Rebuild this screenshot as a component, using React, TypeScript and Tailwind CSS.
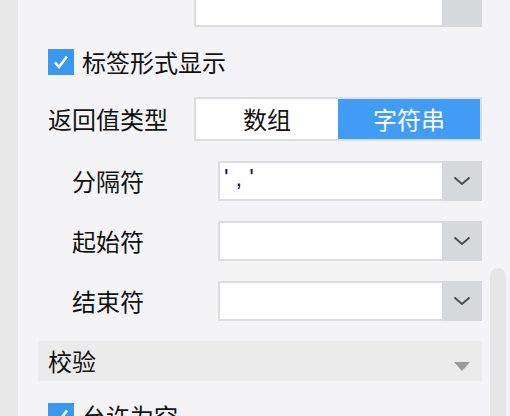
import React from "react";

const FONT = { fontFamily: '"Noto Sans CJK SC", "Noto Sans", sans-serif' };

function Chevron() {
  return (
    <svg width="18" height="10" viewBox="0 0 18 10" aria-hidden="true">
      <path d="M1.5 1.5 L9 8 L16.5 1.5" fill="none" stroke="#4a4a4a" strokeWidth="1.8" />
    </svg>
  );
}

function Check() {
  return (
    <span className="flex h-[26px] w-[26px] shrink-0 items-center justify-center bg-[#3b98f0]">
      <svg width="20" height="20" viewBox="0 0 20 20" aria-hidden="true">
        <path d="M4 10.5 L8 15 L16 4.5" fill="none" stroke="#fff" strokeWidth="2.6" />
      </svg>
    </span>
  );
}

function Select({ value, arrow = true, className = "" }: { value?: string; arrow?: boolean; className?: string }) {
  return (
    <div className={`flex h-[40px] ${className}`}>
      <div className="flex-1 border-y-2 border-l-2 border-[#dcdde0] bg-white pl-[4px] pt-[1px]">
        {value && (
          <span
            className="text-[24px] leading-[24px] tracking-[7px] text-[#1b1464]"
            style={{ fontFamily: '"Liberation Sans", sans-serif' }}
          >
            {value}
          </span>
        )}
      </div>
      <div className="flex w-[40px] items-center justify-center bg-[#d7d8dc]">
        {arrow && <Chevron />}
      </div>
    </div>
  );
}

function Row({ label, value }: { label: string; value?: string }) {
  return (
    <div className="flex items-center">
      <span className="w-[180px] pl-[34px]">{label}</span>
      <Select value={value} className="w-[264px]" />
    </div>
  );
}

export default function App() {
  return (
    <div className="flex h-[416px] w-[510px] overflow-hidden text-[24px] leading-[24px] text-[#111]" style={FONT}>
      <div className="w-[18px] shrink-0 bg-[#e8e8e8]" />
      <div className="relative flex-1 bg-[#f4f4f6] pl-[20px] pr-[28px]">
        <div className="-mt-[13px] flex flex-col">
          <div className="flex justify-end">
            <Select arrow={false} className="w-[288px]" />
          </div>

          <label className="mt-[22px] flex items-center gap-[8px] pl-[10px]">
            <Check />
            <span>标签形式显示</span>
          </label>

          <div className="mt-[22px] flex items-center">
            <span className="flex-1 pl-[10px]">返回值类型</span>
            <div className="flex h-[44px] w-[288px] border-2 border-[#dcdde0]">
              <div className="flex flex-1 items-center justify-center bg-white">数组</div>
              <div className="flex flex-1 items-center justify-center bg-[#409cf5] text-white">字符串</div>
            </div>
          </div>

          <div className="mt-[20px] flex flex-col gap-[20px]">
            <Row label="分隔符" value="','" />
            <Row label="起始符" />
            <Row label="结束符" />
          </div>

          <div className="mt-[20px] flex h-[40px] items-center justify-between bg-[#ebebeb] pl-[10px] pr-[12px]">
            <span>校验</span>
            <svg className="mt-[10px]" width="16" height="9" viewBox="0 0 16 9" aria-hidden="true">
              <path d="M0 0 H16 L8 9 Z" fill="#9a9a9a" />
            </svg>
          </div>

          <label className="mt-[22px] flex items-center gap-[8px] pl-[10px]">
            <Check />
            <span>允许为空</span>
          </label>
        </div>

        <div className="absolute bottom-0 right-[4px] top-[268px] w-[16px] rounded-t-full bg-[#e6e6e6]" />
      </div>
    </div>
  );
}
